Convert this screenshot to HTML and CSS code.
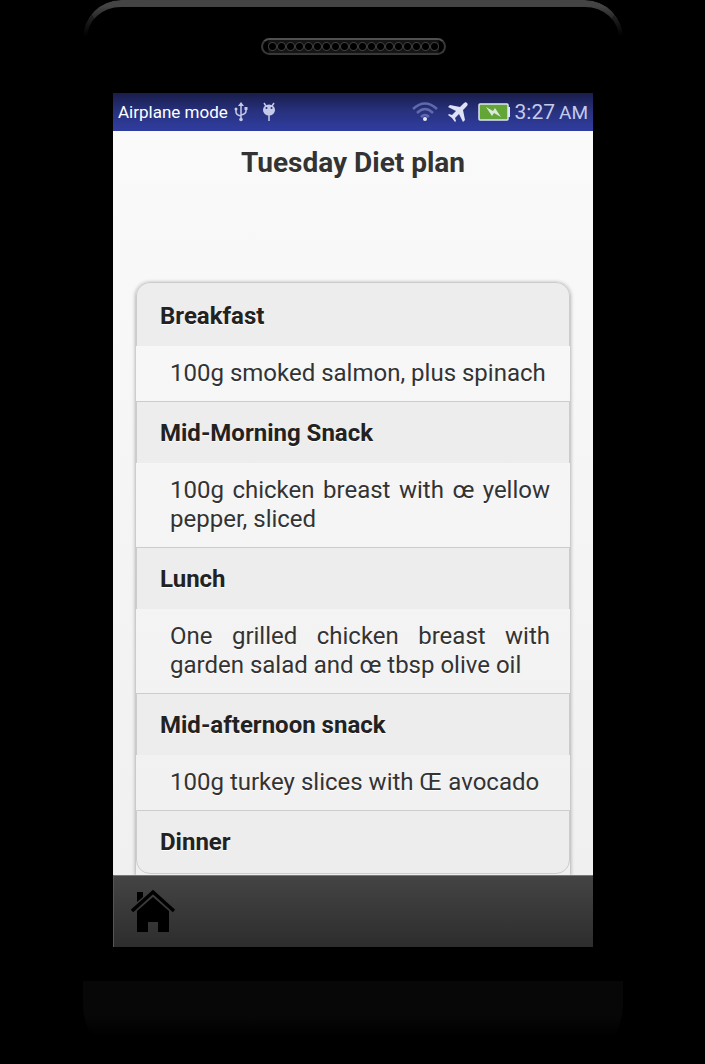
FILE: index.html
```
<!DOCTYPE html>
<html lang="en">
<head>
    <meta charset="UTF-8">
    <meta name="viewport" content="width=device-width, initial-scale=1.0">
    <title>Tuesday Diet plan</title>
    <link rel="stylesheet" href="styles.css">
</head>
<body>

    <div class="phone">
        <div class="phone-top">
            <div class="speaker"></div>
        </div>

        <div class="screen">
            <div class="status-bar">
                <span class="network">Airplane mode</span>
                <svg class="usb" width="14" height="20" viewBox="0 0 14 20">
                    <path d="M7 2v15M2 7v3q0 3 5 4M12 6v3q0 3-5 4" fill="none" stroke="#c5cae9" stroke-width="1.5"/>
                    <path d="M7 0l3 4H4zM10.5 5h3v3h-3z" fill="#c5cae9"/>
                    <circle cx="2" cy="7" r="1.5" fill="#c5cae9"/>
                    <circle cx="7" cy="17.5" r="1.8" fill="#c5cae9"/>
                </svg>
                <svg class="debug" width="14" height="20" viewBox="0 0 14 20">
                    <path d="M2 1l2 3M12 1l-2 3M7 12v7" fill="none" stroke="#c5cae9" stroke-width="1.5"/>
                    <ellipse cx="7" cy="8" rx="6" ry="5.5" fill="#c5cae9"/>
                    <circle cx="4.5" cy="6" r="1" fill="#28327f"/>
                    <circle cx="9.5" cy="6" r="1" fill="#28327f"/>
                </svg>
                <svg class="wifi" width="26" height="20" viewBox="0 0 26 20">
                    <path d="M1 7q12-11 24 0M5 11q8-8 16 0M9 15q4-4 8 0" fill="none" stroke="#5f69ab" stroke-width="2.5"/>
                    <circle cx="13" cy="17" r="2" fill="#e8eaf6"/>
                </svg>
                <svg class="plane" width="20" height="20" viewBox="0 0 20 20">
                    <path d="M19 1c-1-1-2-1-4 1l-3 3L2 3 0 5l8 4-4 4-3-1-1 1 4 3 3 4 1-1-1-3 4-4 4 8 2-2-2-10 3-3c2-2 2-3 1-4z" fill="#dfe2f5"/>
                </svg>
                <svg class="battery" width="32" height="18" viewBox="0 0 32 18">
                    <rect x="1" y="1" width="29" height="16" rx="1" fill="#63a537" stroke="#dfe6f5" stroke-width="1.5"/>
                    <path d="M31 4v10" stroke="#dfe6f5" stroke-width="2"/>
                    <path d="M8 4l7 4 2-3 6 9-7-4-2 3z" fill="#dbe8dd"/>
                </svg>
                <span class="clock">3:27</span>
                <span class="ampm">AM</span>
            </div>

            <main class="content">
                <h1>Tuesday Diet plan</h1>

                <div class="plan">
                    <h2>Breakfast</h2>
                    <p>100g smoked salmon, plus spinach</p>

                    <h2>Mid-Morning Snack</h2>
                    <p>100g chicken breast with œ yellow pepper, sliced</p>

                    <h2>Lunch</h2>
                    <p>One grilled chicken breast with garden salad and œ tbsp olive oil</p>

                    <h2>Mid-afternoon snack</h2>
                    <p>100g turkey slices with Œ avocado</p>

                    <h2>Dinner</h2>
                </div>
            </main>

            <nav class="footer">
                <a href="#" class="home" aria-label="Home">
                    <svg width="46" height="44" viewBox="0 0 46 44">
                        <path d="M6 3h6v5l-6 5z"/>
                        <path d="M1 22L22 3l21 19" fill="none" stroke="#000" stroke-width="3.5"/>
                        <path d="M22 8l16 14v21H27V33H17v10H6V22z"/>
                    </svg>
                </a>
            </nav>
        </div>

        <div class="phone-bottom"></div>
    </div>

</body>
</html>
```
FILE: styles.css
```
* {
    box-sizing: border-box;
}
body {
    margin: 0;
    padding-left: 1px;
    background-color: #000;
    font-family: Roboto, sans-serif;
}
.phone {
    max-width: 540px;
    margin: 0 auto;
    background-color: #000;
}

/* top edge of the phone, fading out down the sides */
.phone-top {
    display: flex;
    justify-content: center;
    height: 93px;
    padding-top: 31px;
    border: 4px solid #333;
    border-top: 7px solid #444;
    border-bottom: none;
    border-radius: 38px 38px 0 0;
    -webkit-mask-image: linear-gradient(#000 6px, transparent 36px), linear-gradient(90deg, transparent 60px, #000 60px, #000 calc(100% - 60px), transparent calc(100% - 60px));
    mask-image: linear-gradient(#000 6px, transparent 36px), linear-gradient(90deg, transparent 60px, #000 60px, #000 calc(100% - 60px), transparent calc(100% - 60px));
}
.speaker {
    width: 185px;
    height: 17px;
    padding: 0 5px;
    border: 2px solid #383838;
    border-top-color: #505050;
    border-radius: 9px;
    background-color: #151515;
    background-image: radial-gradient(circle, #000 3px, #3c3c3c 4px, #151515 5px);
    background-size: 9px 13px;
    background-repeat: round;
    background-origin: content-box;
    background-clip: content-box;
}
.screen {
    margin: 0 30px;
}

.status-bar {
    display: flex;
    align-items: center;
    height: 38px;
    padding: 0 5px;
    background: linear-gradient(#191d4b, #28327f 50%, #303da0);
    color: #fff;
}
.network {
    font-size: 17px;
}
.usb {
    margin-left: 6px;
}
.debug {
    margin-left: 14px;
}
.wifi {
    margin-left: auto;
}
.plane {
    margin-left: 10px;
}
.battery {
    margin-left: 10px;
}
.clock {
    margin-left: 5px;
    font-size: 21px;
    color: #c5cae9;
}
.ampm {
    margin-left: 4px;
    font-size: 19px;
    color: #c5cae9;
}

.content {
    padding: 12px 23px 0;
    overflow: hidden;
    background: linear-gradient(#fafafa, #f0f0f0);
    color: #333;
    text-shadow: 0 1px 0 #fff;
}
h1 {
    margin: 0 0 99px;
    font-size: 28px;
    line-height: 40px;
    text-align: center;
}
.plan {
    padding-bottom: 1px;
    border-radius: 14px 14px 0 0;
    box-shadow: 0 1px 4px rgba(0, 0, 0, 0.4);
    background: linear-gradient(#f8f8f8, #f0f0f0);
}
.plan h2 {
    margin: 0;
    padding: 16px 23px 14px;
    border: 1px solid #ccc;
    border-bottom: none;
    background-color: #ededed;
    color: #222;
    font-size: 24px;
    line-height: 31px;
}
.plan h2:first-child {
    padding-top: 18px;
    border-radius: 14px 14px 0 0;
}
.plan h2:last-child {
    padding-bottom: 15px;
    border-bottom: 1px solid #ccc;
    border-radius: 0 0 14px 14px;
}
.plan p {
    margin: 0;
    padding: 13px 20px 13px 34px;
    font-size: 24px;
    line-height: 29px;
    text-align: justify;
}

.footer {
    height: 72px;
    padding: 13px 17px;
    border-top: 1px solid #777;
    border-left: 1px solid #555;
    background: linear-gradient(#444, #2d2d2d);
}
.home {
    display: inline-block;
}
.home svg {
    display: block;
}

/* faint glow on the lower part of the body */
.phone-bottom {
    height: 83px;
    margin-top: 34px;
    background: linear-gradient(#070707 35px, #000 55px);
    border-radius: 0 0 60px 60px;
}
```
